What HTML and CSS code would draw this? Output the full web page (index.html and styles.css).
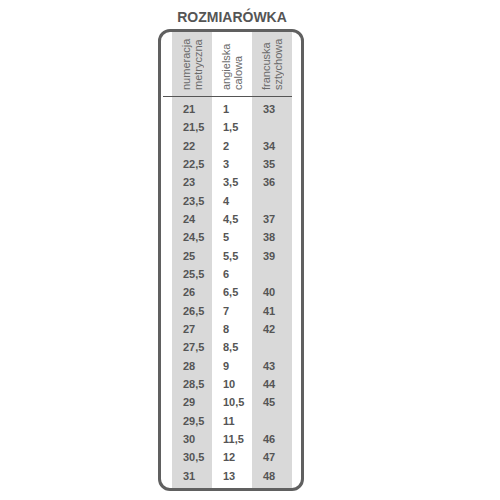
FILE: index.html
```html
<!DOCTYPE html>
<html lang="pl">
<head>
<meta charset="utf-8">
<title>Rozmiarówka</title>
<link rel="stylesheet" href="styles.css">
</head>
<body>
<div class="wrap">
  <h1 class="title">ROZMIARÓWKA</h1>
  <div class="frame">
    <div class="head">
      <div class="hcell shade"><div class="vt">numeracja<br>metryczna</div></div>
      <div class="hcell"><div class="vt">angielska<br>calowa</div></div>
      <div class="hcell shade"><div class="vt">francuska<br>sztychowa</div></div>
    </div>
    <div class="body">
      <div class="col shade">
        <div>21</div><div>21,5</div><div>22</div><div>22,5</div><div>23</div><div>23,5</div><div>24</div><div>24,5</div><div>25</div><div>25,5</div><div>26</div><div>26,5</div><div>27</div><div>27,5</div><div>28</div><div>28,5</div><div>29</div><div>29,5</div><div>30</div><div>30,5</div><div>31</div>
      </div>
      <div class="col">
        <div>1</div><div>1,5</div><div>2</div><div>3</div><div>3,5</div><div>4</div><div>4,5</div><div>5</div><div>5,5</div><div>6</div><div>6,5</div><div>7</div><div>8</div><div>8,5</div><div>9</div><div>10</div><div>10,5</div><div>11</div><div>11,5</div><div>12</div><div>13</div>
      </div>
      <div class="col shade">
        <div>33</div><div></div><div>34</div><div>35</div><div>36</div><div></div><div>37</div><div>38</div><div>39</div><div></div><div>40</div><div>41</div><div>42</div><div></div><div>43</div><div>44</div><div>45</div><div></div><div>46</div><div>47</div><div>48</div>
      </div>
    </div>
  </div>
</div>
</body>
</html>
```

FILE: styles.css
```css
html, body {
  margin: 0;
  padding: 0;
  background: #ffffff;
}

body {
  font-family: "Liberation Sans", Arial, sans-serif;
}

.wrap {
  width: 146px;
  margin-left: 158px;
  padding-top: 9px;
}

.title {
  margin: 0 0 4px 0;
  font-size: 14px;
  line-height: 16px;
  font-weight: bold;
  color: #555555;
  text-align: center;
  padding-left: 2px;
}

.frame {
  border: 3px solid #606060;
  border-radius: 12px;
  overflow: hidden;
  background: #ffffff;
}

.head {
  display: grid;
  grid-template-columns: 40px 40px 40px;
  margin: 0 9px 0 2px;
  padding-left: 9px;
  border-bottom: 1px solid #555555;
}

.hcell {
  height: 64px;
  display: flex;
  justify-content: center;
}

.shade {
  background: #d9d9d9;
}

.vt {
  writing-mode: vertical-rl;
  transform: rotate(180deg);
  height: 64px;
  box-sizing: border-box;
  padding-top: 6px;
  font-size: 11px;
  line-height: 11.5px;
  color: #6a6a6a;
  white-space: nowrap;
}

.body {
  display: grid;
  grid-template-columns: 40px 40px 40px;
  padding-left: 11px;
}

.col {
  padding: 3px 0 3px 11px;
  font-size: 11px;
  font-weight: bold;
  color: #555555;
}

.col > div {
  height: 18.333px;
  line-height: 18.333px;
}
```
